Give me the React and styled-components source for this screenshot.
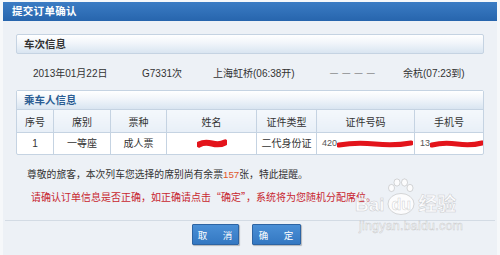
import React from "react";
import styled, { createGlobalStyle } from "styled-components";

const Global = createGlobalStyle`
  html, body { margin: 0; padding: 0; background: #f6f8fa; }
  body { font-family: "Liberation Sans", "Noto Sans CJK SC", sans-serif; color: #333; }
`;

const Dialog = styled.div`
  position: relative;
  margin: 2px 3px 0 3px;
  height: 253px;
  background: #edf1f6;
  box-sizing: border-box;
`;

const TitleBar = styled.div`
  height: 19px;
  line-height: 19px;
  padding-left: 9px;
  background: linear-gradient(#3b7cc4, #2765ad);
  color: #fff;
  font-weight: bold;
  font-size: 10.5px;
  letter-spacing: 0.3px;
`;

const Body = styled.div`
  padding: 13px 13px 0 13px;
`;

const SectionHead = styled.div`
  height: 18px;
  line-height: 18px;
  padding-left: 7px;
  border: 1px solid #c5d3e2;
  border-radius: 2px;
  background: linear-gradient(#ffffff, #f1f5fa 45%, #d9e5f1);
  font-size: 10.5px;
  font-weight: bold;
  color: ${(p) => (p.$blue ? "#2b5d93" : "#333")};
`;

const TrainRow = styled.div`
  display: grid;
  grid-template-columns: 109px 71px 117px 73px auto;
  align-items: center;
  height: 36px;
  padding-left: 17px;
  font-size: 10px;
  color: #333;
`;

const Dash = styled.span`
  font-size: 8px;
  color: #555;
  letter-spacing: 1px;
`;

const PassengerBox = styled.div`
  border: 1px solid #c5d3e2;
  border-radius: 2px;
  background: #fff;
`;

const PassengerHead = styled(SectionHead)`
  border: none;
  border-bottom: 1px solid #c5d3e2;
  border-radius: 0;
  height: 18px;
  line-height: 18px;
  font-weight: 600;
`;

const Table = styled.table`
  width: 100%;
  border-collapse: collapse;
  table-layout: fixed;
  font-size: 10px;
`;

const Th = styled.th`
  height: 22px;
  padding: 0;
  font-weight: normal;
  color: #333;
  background: linear-gradient(#f4f8fc, #e8eff7);
  border-right: 1px solid #c5d3e2;
  border-bottom: 1px solid #c5d3e2;
  width: ${(p) => p.$w}px;
  &:last-child { border-right: none; }
`;

const Td = styled.td`
  height: 21px;
  padding: 0 0 0 ${(p) => (p.$left ? "5px" : "0")};
  line-height: 21px;
  text-align: ${(p) => (p.$left ? "left" : "center")};
  border-right: 1px solid #c5d3e2;
  color: #333;
  white-space: nowrap;
  overflow: hidden;
  &:last-child { border-right: none; }
`;

const Masked = styled.span`
  display: inline-flex;
  align-items: center;
  vertical-align: top;
  height: 21px;
  color: #555;
  font-size: 9px;
  & > svg { display: block; }
`;

const Notice = styled.div`
  padding: 9px 0 0 11px;
  font-size: 9.8px;
  line-height: 22px;
`;

const Hl = styled.span`
  color: #e0562a;
`;

const Warn = styled.div`
  color: #c8262f;
  padding-left: 4px;
  font-family: "Noto Sans CJK SC", sans-serif;
  font-size: 10px;
`;

const Divider = styled.div`
  margin: 12px 2px 0 2px;
  border-top: 1px solid #d3dbe4;
`;

const Buttons = styled.div`
  display: flex;
  justify-content: center;
  gap: 13px;
  padding: 3px 0 0 0;
  margin-left: -8px;
`;

const Btn = styled.button`
  width: ${(p) => p.$w}px;
  height: 21px;
  padding: 0;
  border: 1px solid #2d64a3;
  border-radius: 1px;
  background: linear-gradient(#4a8fd6, #3478c2);
  box-shadow: 1px 1px 1px rgba(0,0,0,0.25);
  color: #fff;
  font-family: "Noto Sans CJK SC", sans-serif;
  font-size: 9.5px;
  white-space: nowrap;
  letter-spacing: 3px;
  text-indent: 3px;
`;

const Watermark = styled.div`
  position: absolute;
  left: 352px;
  top: 176px;
  width: 125px;
  pointer-events: none;
  color: rgba(255,255,255,0.8);
  -webkit-text-stroke: 0.5px rgba(160,160,160,0.5);
  font-family: "Liberation Sans", "Noto Sans CJK SC", sans-serif;
`;

const WmLogo = styled.div`
  display: flex;
  align-items: flex-end;
  gap: 3px;
  font-size: 19px;
  font-weight: bold;
  line-height: 20px;
  margin-top: 17px;
`;

const WmDu = styled.span`
  position: relative;
  padding: 0 4px;
  font-size: 16px;
`;

const WmDuText = styled.span`
  position: relative;
`;

const WmPaw = styled.svg`
  position: absolute;
  left: -1px;
  top: -17px;
`;

const WmSub = styled.div`
  font-size: 12.5px;
  line-height: 14px;
  margin-top: 4px;
  margin-left: 4px;
  letter-spacing: 0.2px;
`;

function Scribble({ w, h = 8 }) {
  return (
    <svg width={w} height={h} viewBox={`0 0 ${w} ${h}`}>
      <path
        d={`M2 ${h / 2 + 1} Q ${w * 0.25} ${h / 2 - 2} ${w * 0.5} ${h / 2} T ${w - 2} ${h / 2 - 1}`}
        stroke="#e3141b"
        strokeWidth={h - 3}
        strokeLinecap="round"
        fill="none"
      />
    </svg>
  );
}

export default function App() {
  return (
    <>
      <Global />
      <Dialog lang="zh-CN">
        <TitleBar>提交订单确认</TitleBar>
        <Body>
          <SectionHead>车次信息</SectionHead>
          <TrainRow>
            <span>2013年01月22日</span>
            <span>G7331次</span>
            <span>上海虹桥(06:38开)</span>
            <Dash>— — — —</Dash>
            <span>余杭(07:23到)</span>
          </TrainRow>
          <PassengerBox>
            <PassengerHead $blue>乘车人信息</PassengerHead>
            <Table>
              <thead>
                <tr>
                  <Th $w={36}>序号</Th>
                  <Th $w={56}>席别</Th>
                  <Th $w={55}>票种</Th>
                  <Th $w={89}>姓名</Th>
                  <Th $w={59}>证件类型</Th>
                  <Th $w={97}>证件号码</Th>
                  <Th>手机号</Th>
                </tr>
              </thead>
              <tbody>
                <tr>
                  <Td>1</Td>
                  <Td>一等座</Td>
                  <Td>成人票</Td>
                  <Td><Masked><Scribble w={30} h={9} /></Masked></Td>
                  <Td>二代身份证</Td>
                  <Td $left><Masked>420<Scribble w={76} h={8} /></Masked></Td>
                  <Td $left><Masked>13<Scribble w={54} h={8} /></Masked></Td>
                </tr>
              </tbody>
            </Table>
          </PassengerBox>
          <Notice>
            <div>尊敬的旅客，本次列车您选择的席别尚有余票<Hl>157</Hl>张，特此提醒。</div>
            <Warn>请确认订单信息是否正确，如正确请点击“确定”，系统将为您随机分配席位。</Warn>
          </Notice>
        </Body>
        <Divider />
        <Buttons>
          <Btn $w={47}>取　消</Btn>
          <Btn $w={49}>确　定</Btn>
        </Buttons>
        <Watermark aria-hidden="true">
          <WmLogo>
            <span>Bai</span>
            <WmDu>
              <WmPaw width="28" height="38" viewBox="0 0 28 38">
                <g fill="rgba(255,255,255,0.8)" stroke="rgba(160,160,160,0.5)" strokeWidth="0.8">
                  <ellipse cx="4.5" cy="10" rx="3" ry="3.6" />
                  <ellipse cx="10" cy="4.5" rx="3" ry="3.6" />
                  <ellipse cx="17.5" cy="4.5" rx="3" ry="3.6" />
                  <ellipse cx="23" cy="10" rx="3" ry="3.6" />
                  <ellipse cx="14" cy="26" rx="13" ry="10.5" />
                </g>
              </WmPaw>
              <WmDuText>du</WmDuText>
            </WmDu>
            <span>经验</span>
          </WmLogo>
          <WmSub>jingyan.baidu.com</WmSub>
        </Watermark>
      </Dialog>
    </>
  );
}
